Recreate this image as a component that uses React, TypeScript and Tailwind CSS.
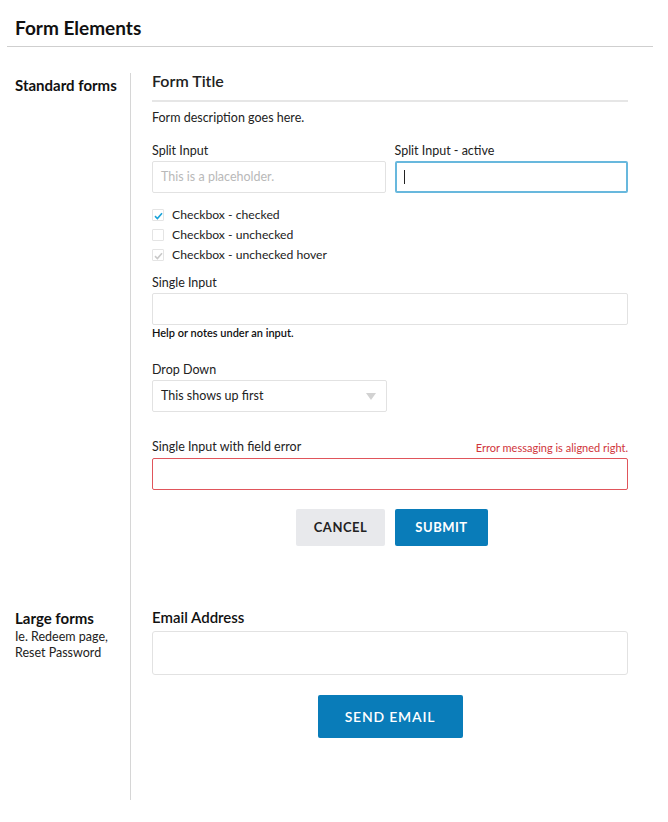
import React from "react";

const font = { fontFamily: "Lato, 'Open Sans', sans-serif" };

function Check({ color }: { color: string }) {
  return (
    <svg width="9" height="8" viewBox="0 0 9 8" className="absolute left-[1px] top-[2px]">
      <path d="M1 4.2 L3.4 6.5 L8 1.2" fill="none" stroke={color} strokeWidth="1.6" />
    </svg>
  );
}

function CheckRow({ state, label }: { state: "checked" | "unchecked" | "hover"; label: string }) {
  return (
    <div className="flex items-center h-[20px]">
      <div className="relative w-[12px] h-[12px] border border-[#e4e4e4] rounded-[1px] bg-white">
        {state === "checked" && <Check color="#1aa3d9" />}
        {state === "hover" && <Check color="#c9c9c9" />}
      </div>
      <span className="ml-[8px] text-[12.2px] text-[#222]">{label}</span>
    </div>
  );
}

export default function App() {
  return (
    <div className="w-[668px] h-[822px] bg-white text-[#1a1a1a]" style={font}>
      <div className="px-[7px] pt-[16px]">
        <h1 className="pl-[8px] text-[19px] font-bold leading-[24px] text-[#111]">Form Elements</h1>
        <div className="mt-[6px] h-px w-[646px] bg-[#cfcfcf]" />
      </div>
      <div className="flex mt-[26px]">
        <div className="w-[131px] shrink-0 pl-[15px] border-r border-[#d6d6d6] flex flex-col h-[727px]">
          <div className="mt-[3px] text-[15px] font-bold leading-[18px] text-[#111]">Standard forms</div>
          <div className="mt-[515px] text-[15px] font-bold leading-[18px] text-[#111]">Large forms</div>
          <div className="mt-[2px] text-[12.5px] leading-[16px] text-[#222]">Ie. Redeem page,</div>
          <div className="text-[12.5px] leading-[16px] text-[#222]">Reset Password</div>
        </div>
        <div className="w-[476px] ml-[21px] flex flex-col">
          <div className="-mt-[2px] text-[16px] font-semibold leading-[20px] text-[#222]">Form Title</div>
          <div className="mt-[9px] h-[2px] bg-[#e6e6e6]" />
          <div className="mt-[8px] text-[12.5px] leading-[16px] text-[#222]">Form description goes here.</div>

          <div className="mt-[17px] flex gap-[9px]">
            <div className="flex-1">
              <div className="text-[12.5px] leading-[16px] text-[#222]">Split Input</div>
              <div className="mt-[2px] h-[32px] border border-[#e2e2e2] rounded-[2px] flex items-center px-[8px] text-[12.5px] text-[#b9b9b9]">
                This is a placeholder.
              </div>
            </div>
            <div className="flex-1">
              <div className="text-[12.5px] leading-[16px] text-[#222]">Split Input - active</div>
              <div className="mt-[2px] h-[32px] border-2 border-[#68b8dd] rounded-[2px] flex items-center px-[7px]">
                <div className="w-px h-[14px] bg-[#222]" />
              </div>
            </div>
          </div>

          <div className="mt-[12px] flex flex-col">
            <CheckRow state="checked" label="Checkbox - checked" />
            <CheckRow state="unchecked" label="Checkbox - unchecked" />
            <CheckRow state="hover" label="Checkbox - unchecked hover" />
          </div>

          <div className="mt-[10px] text-[12.5px] leading-[16px] text-[#222]">Single Input</div>
          <div className="mt-[2px] h-[32px] border border-[#e2e2e2] rounded-[2px]" />
          <div className="mt-[1px] text-[11px] font-semibold leading-[14px] text-[#111]">Help or notes under an input.</div>

          <div className="mt-[22px] text-[12.5px] leading-[16px] text-[#222]">Drop Down</div>
          <div className="mt-[2px] w-[235px] h-[32px] border border-[#e2e2e2] rounded-[2px] flex items-center justify-between pl-[8px] pr-[10px]">
            <span className="text-[12.5px] text-[#222]">This shows up first</span>
            <svg width="10" height="7" viewBox="0 0 10 7">
              <path d="M0 0 L10 0 L5 7 Z" fill="#d2d2d2" />
            </svg>
          </div>

          <div className="mt-[27px] flex justify-between items-end">
            <span className="text-[12.5px] leading-[16px] text-[#222]">Single Input with field error</span>
            <span className="text-[11px] leading-[14px] text-[#d0343a]">Error messaging is aligned right.</span>
          </div>
          <div className="mt-[3px] h-[32px] border border-[#e0555b] rounded-[2px]" />

          <div className="mt-[19px] flex justify-center gap-[10px] pl-[4px]">
            <button className="w-[89px] h-[37px] bg-[#e8e9ec] rounded-[2px] text-[13px] font-bold tracking-[0.5px] text-[#222]">CANCEL</button>
            <button className="w-[93px] h-[37px] bg-[#097cb9] rounded-[2px] text-[13px] font-bold tracking-[0.5px] text-white">SUBMIT</button>
          </div>

          <div className="mt-[61px] text-[15px] font-semibold leading-[20px] text-[#111]">Email Address</div>
          <div className="mt-[4px] h-[44px] border border-[#e2e2e2] rounded-[3px]" />
          <div className="mt-[20px] flex justify-center">
            <button className="w-[145px] h-[43px] bg-[#097cb9] rounded-[2px] text-[14px] font-semibold tracking-[0.8px] text-white">SEND EMAIL</button>
          </div>
        </div>
      </div>
    </div>
  );
}
